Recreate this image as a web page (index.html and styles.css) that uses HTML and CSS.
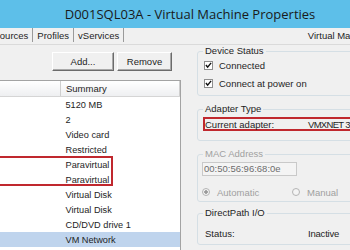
FILE: index.html
```html
<!DOCTYPE html>
<html>
<head>
    <title>D001SQL03A - Virtual Machine Properties</title>
    <meta charset='utf-8'>
    <link rel="stylesheet" href="styles.css">
</head>
<body>
    <div class="window">
        <div class="titlebar">D001SQL03A - Virtual Machine Properties</div>

        <div class="tabbar">
            <div class="tabs">
                <span class="tab active">Hardware</span>
                <span class="tab">Options</span>
                <span class="tab">Resources</span>
                <span class="tab">Profiles</span>
                <span class="tab">vServices</span>
            </div>
            <div class="vm-version">Virtual Machine Version: 8</div>
        </div>

        <div class="content">
            <!-- hardware list -->
            <div class="hw-panel">
                <div class="hw-buttons">
                    <button class="btn btn-add">Add...</button>
                    <button class="btn btn-remove">Remove</button>
                </div>
                <div class="hw-list">
                    <table>
                        <thead>
                            <tr><th class="col-hw">Hardware</th><th>Summary</th></tr>
                        </thead>
                        <tbody>
                            <tr><td class="col-hw">Memory</td><td>5120 MB</td></tr>
                            <tr><td class="col-hw">CPUs</td><td>2</td></tr>
                            <tr><td class="col-hw">Video card</td><td>Video card</td></tr>
                            <tr><td class="col-hw">VMCI device</td><td>Restricted</td></tr>
                            <tr><td class="col-hw">SCSI controller 0</td><td>Paravirtual</td></tr>
                            <tr><td class="col-hw">SCSI controller 1</td><td>Paravirtual</td></tr>
                            <tr><td class="col-hw">Hard disk 1</td><td>Virtual Disk</td></tr>
                            <tr><td class="col-hw">Hard disk 2</td><td>Virtual Disk</td></tr>
                            <tr><td class="col-hw">CD/DVD drive 1</td><td>CD/DVD drive 1</td></tr>
                            <tr class="selected"><td class="col-hw">Network adapter 1</td><td>VM Network</td></tr>
                        </tbody>
                    </table>
                    <div class="mark mark-scsi"></div>
                </div>
            </div>

            <!-- device properties -->
            <div class="dev-panel">
                <fieldset class="fs-status">
                    <legend>Device Status</legend>
                    <label class="check-row"><span class="checkbox"><svg viewBox="0 0 8 8" width="7" height="7"><path d="M1 3.5 L3 5.8 L7 1" fill="none" stroke="#111" stroke-width="1.6"/></svg></span>Connected</label>
                    <label class="check-row"><span class="checkbox"><svg viewBox="0 0 8 8" width="7" height="7"><path d="M1 3.5 L3 5.8 L7 1" fill="none" stroke="#111" stroke-width="1.6"/></svg></span>Connect at power on</label>
                </fieldset>

                <fieldset class="fs-adapter">
                    <legend>Adapter Type</legend>
                    <div class="prop-row adapter-row">
                        <span class="prop-label">Current adapter:</span>
                        <span class="prop-value adapter-name">VMXNET 3</span>
                    </div>
                </fieldset>

                <fieldset class="fs-mac disabled">
                    <legend>MAC Address</legend>
                    <div class="mac-box">00:50:56:96:68:0e</div>
                    <div class="radio-row">
                        <span class="radio-opt"><span class="radio checked"></span>Automatic</span>
                        <span class="radio-opt"><span class="radio"></span>Manual</span>
                    </div>
                </fieldset>

                <fieldset class="fs-direct">
                    <legend>DirectPath I/O</legend>
                    <div class="prop-row">
                        <span class="prop-label">Status:</span>
                        <span class="prop-value">Inactive</span>
                        <svg class="info-icon" viewBox="0 0 12 12" width="12" height="12"><circle cx="6" cy="6" r="5.5" fill="#3a8ee6"/><rect x="5.2" y="5" width="1.6" height="4.5" fill="#fff"/><rect x="5.2" y="2.5" width="1.6" height="1.6" fill="#fff"/></svg>
                    </div>
                </fieldset>
            </div>
        </div>
    </div>
</body>
</html>
```

FILE: styles.css
```css
html, body {
    margin: 0;
    height: 100%;
    overflow: hidden;
}
body {
    background: #f0f0f0;
    font-family: 'Liberation Sans', Arial, sans-serif;
    font-size: 9.5px;
    color: #1e1e1e;
}
.window {
    width: 640px;
    margin-left: -130px;
}
.titlebar {
    height: 28px;
    line-height: 28px;
    background: #5dbfe9;
    text-align: center;
    font-family: 'Open Sans', sans-serif;
    font-size: 13px;
    color: #1a1a1a;
}
.tabbar {
    display: flex;
    align-items: flex-start;
    height: 16px;
    border-bottom: 1px solid #dadada;
}
.tabs {
    display: flex;
    padding-left: 17px;
}
.tab {
    padding: 0 4px;
    height: 14px;
    line-height: 15px;
    border-right: 1px solid #9a9a9a;
}
.vm-version {
    margin-left: auto;
    padding-right: 92px;
    line-height: 16px;
}
.content {
    display: flex;
}
.hw-panel {
    width: 311px;
}
.hw-buttons {
    display: flex;
    justify-content: flex-end;
    gap: 3px;
    padding: 7px 9px 0 0;
    margin-bottom: 9px;
}
.btn {
    height: 19px;
    padding: 0;
    font-family: inherit;
    font-size: 9.5px;
    color: #1e1e1e;
    background: #f0f0f0;
    border: 1px solid;
    border-color: #fff #6b6b6b #6b6b6b #fff;
    box-shadow: inset -1px -1px 0 #a9a9a9;
}
.btn-add {
    width: 62px;
}
.btn-remove {
    width: 55px;
}
.hw-list {
    position: relative;
    height: 200px;
    background: #fff;
    border: 1px solid #a3a3a3;
    border-left: none;
}
.hw-list table {
    width: 100%;
    border-collapse: collapse;
}
.hw-list th {
    height: 15px;
    padding: 0 5px;
    text-align: left;
    font-weight: normal;
    background: linear-gradient(#ffffff, #eeeff1);
    border-bottom: 1px solid #d5d5d5;
    border-right: 1px solid #cfcfcf;
}
.hw-list td {
    height: 15px;
    padding: 0 5px;
    white-space: nowrap;
    font-size: 9.2px;
}
.hw-list .col-hw {
    width: 161px;
    padding-left: 24px;
}
.hw-list tr.selected td {
    background: #bfd4ed;
}
.mark {
    position: absolute;
    border: 2px solid #c0282e;
}
.mark-scsi {
    left: 60px;
    top: 75px;
    width: 179px;
    height: 26px;
}
.dev-panel {
    width: 300px;
    margin-left: 16px;
}
fieldset {
    margin: 0 0 7px;
    padding: 0 6px 4px 5px;
    border: 1px solid #d5dfe5;
    border-radius: 3px;
}
legend {
    padding: 0 2px;
    line-height: 12px;
}
.check-row {
    display: flex;
    align-items: center;
    height: 16px;
    margin-bottom: 2px;
}
.check-row:last-child {
    margin-bottom: 0;
}
.checkbox {
    display: flex;
    align-items: center;
    justify-content: center;
    width: 7px;
    height: 7px;
    margin: 0 6px 0 1px;
    background: #fff;
    border: 1px solid #8e8e8e;
}
.prop-row {
    display: flex;
    align-items: center;
    height: 10px;
    padding-left: 2px;
}
.prop-label {
    width: 103px;
}
.prop-value {
    letter-spacing: -0.2px;
}
.adapter-name {
    letter-spacing: -0.7px;
}
.fs-adapter {
    padding-bottom: 9px;
}
.adapter-row {
    margin-top: 2px;
    padding-left: 0;
    border: 2px solid #c0282e;
}
.fs-mac {
    margin-bottom: 5px;
    padding-bottom: 2px;
}
.disabled legend,
.disabled .radio-opt {
    color: #a0a0a0;
}
.mac-box {
    width: 92px;
    height: 12px;
    line-height: 12px;
    margin: 2px 0 0 -1px;
    padding-left: 1px;
    color: #6d6d6d;
    background: #f4f4f4;
    border: 1px solid #c9c9c9;
}
.radio-row {
    display: flex;
    align-items: center;
    height: 14px;
    margin-top: 9px;
}
.radio-opt {
    display: flex;
    align-items: center;
    gap: 7px;
    width: 91px;
    margin-left: -1px;
}
.radio {
    width: 6px;
    height: 6px;
    border: 1px solid #b4b4b4;
    border-radius: 50%;
    background: #f4f4f4;
}
.radio.checked {
    background: radial-gradient(circle, #9a9a9a 0 1.5px, #f4f4f4 2px);
}
.fs-direct .prop-row {
    margin-top: 7px;
    height: 14px;
}
.info-icon {
    margin-left: 11px;
}
```
